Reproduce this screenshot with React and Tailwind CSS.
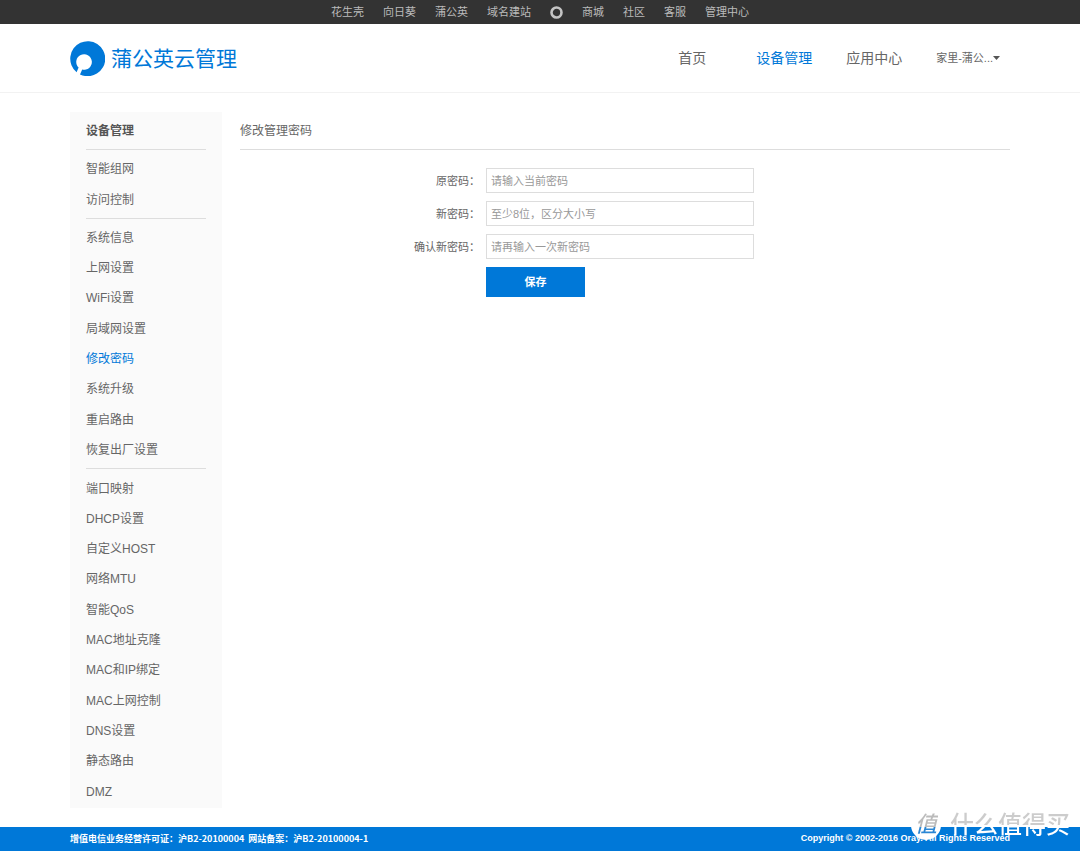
import React, { useState } from 'react';

const topLinks = ['花生壳', '向日葵', '蒲公英', '域名建站'];
const topLinksRight = ['商城', '社区', '客服', '管理中心'];

const fields = [
  { id: 'oldPwd', label: '原密码：', placeholder: '请输入当前密码' },
  { id: 'newPwd', label: '新密码：', placeholder: '至少8位，区分大小写' },
  { id: 'confirmPwd', label: '确认新密码：', placeholder: '请再输入一次新密码' },
];

const menuGroups = [
  {
    grow: 'grow-2',
    items: ['智能组网', '访问控制'],
  },
  {
    grow: 'grow-8',
    items: ['系统信息', '上网设置', 'WiFi设置', '局域网设置', '修改密码', '系统升级', '重启路由', '恢复出厂设置'],
  },
  {
    grow: 'grow-11',
    items: [
      '端口映射',
      'DHCP设置',
      '自定义HOST',
      '网络MTU',
      '智能QoS',
      'MAC地址克隆',
      'MAC和IP绑定',
      'MAC上网控制',
      'DNS设置',
      '静态路由',
      'DMZ',
    ],
  },
];

export default function App() {
  return (
    <div
      lang="zh-CN"
      className="relative flex min-h-screen flex-col bg-white font-['Liberation_Sans','Noto_Sans_CJK_SC',sans-serif] text-[#666]"
    >
      <TopBar />
      <Header />
      <main className="mx-auto flex w-full max-w-[940px] grow gap-[18px] py-[19px]">
        <Sidebar />
        <PasswordForm />
      </main>
      <Footer />
      <Watermark />
    </div>
  );
}

function TopBar() {
  return (
    <nav className="flex h-6 items-center justify-center gap-[19px] bg-[#333] pt-px text-[11px] text-[#bbb]">
      {topLinks.map((text) => (
        <a key={text} href="#">{text}</a>
      ))}
      <a href="#" aria-label="Oray">
        <svg className="size-[13px]" viewBox="0 0 13 13">
          <circle cx="6.5" cy="6.5" r="5" fill="none" stroke="#c4c4c4" strokeWidth="2.6" />
        </svg>
      </a>
      {topLinksRight.map((text) => (
        <a key={text} href="#">{text}</a>
      ))}
    </nav>
  );
}

function Header() {
  return (
    <header className="border-b border-[#f2f2f2]">
      <div className="mx-auto flex h-[68px] w-full max-w-[940px] items-center justify-between">
        <a href="#" className="flex items-center gap-[6px] pt-px text-[21px] text-[#0078d8]">
          <svg className="size-[35px]" viewBox="0 0 35 35">
            <path
              d="M6.6 31.2A17.5 17.5 0 1 1 10 33.4L12.2 28.6A7.8 7.8 0 1 0 8.6 26.6Z"
              fill="#0078d8"
            />
          </svg>
          蒲公英云管理
        </a>
        <nav className="flex items-center gap-[34px] pr-[10px] text-sm">
          <a href="#" className="mr-4">首页</a>
          <a href="#" className="text-[#0078d8]">设备管理</a>
          <a href="#">应用中心</a>
          <button type="button" className="flex items-center pt-px text-[11px]">
            家里-蒲公...
            <svg className="h-1 w-[7px]" viewBox="0 0 7 4">
              <path d="M0 0H7L3.5 4Z" fill="#555" />
            </svg>
          </button>
        </nav>
      </div>
    </header>
  );
}

function Sidebar() {
  return (
    <aside className="flex w-[152px] shrink-0 flex-col bg-[#fafafa] px-4 text-xs">
      <h2 className="h-[37px] font-bold leading-[38px] text-[#555]">设备管理</h2>
      {menuGroups.map((group) => (
        <ul
          key={group.grow}
          className={`flex flex-col border-t border-[#ddd] pt-1 pb-[3px] last:pb-px ${group.grow}`}
        >
          {group.items.map((item) => (
            <li key={item} className="flex min-h-[30px] grow items-center">
              <a href="#" className={item === '修改密码' ? 'text-[#0078d8]' : ''}>{item}</a>
            </li>
          ))}
        </ul>
      ))}
    </aside>
  );
}

function PasswordForm() {
  const [values, setValues] = useState({});

  return (
    <section className="min-w-0 grow">
      <h1 className="h-[38px] border-b border-[#ddd] text-xs leading-[38px]">修改管理密码</h1>
      <form
        className="flex flex-col gap-2 pt-[18px] text-[11px]"
        onSubmit={(e) => e.preventDefault()}
      >
        {fields.map((field) => (
          <div key={field.id} className="flex items-center gap-[6px]">
            <label htmlFor={field.id} className="w-60 pt-px text-right">{field.label}</label>
            <input
              id={field.id}
              type="text"
              value={values[field.id] || ''}
              onChange={(e) => setValues({ ...values, [field.id]: e.target.value })}
              placeholder={field.placeholder}
              className="h-[25px] w-[268px] border border-[#ddd] px-1 placeholder:text-[#999]"
            />
          </div>
        ))}
        <button
          type="submit"
          className="ml-[246px] h-[30px] w-[99px] bg-[#0078d8] font-bold text-white"
        >
          保存
        </button>
      </form>
    </section>
  );
}

function Footer() {
  return (
    <footer className="bg-[#0078d8] text-[9px] font-bold text-white">
      <div className="mx-auto flex h-6 w-full max-w-[940px] items-center justify-between">
        <p className="font-['Noto_Sans_CJK_SC',sans-serif]">
          增值电信业务经营许可证：沪B2-20100004&nbsp; 网站备案：沪B2-20100004-1
        </p>
        <p>Copyright © 2002-2016 Oray. All Rights Reserved</p>
      </div>
    </footer>
  );
}

function Watermark() {
  return (
    <div className="pointer-events-none absolute right-[10px] bottom-[10px] flex items-center gap-[9px]">
      <span className="flex size-[30px] items-center justify-center rounded-full bg-white">
        <span className="bg-linear-to-b from-[#bbb] from-57% to-[#2a86d4] to-57% bg-clip-text px-px text-[22px] font-medium italic leading-[30px] text-transparent">
          值
        </span>
      </span>
      <span className="bg-linear-to-b from-[#ccc] from-50% to-white to-50% bg-clip-text text-2xl font-medium text-transparent">
        什么值得买
      </span>
    </div>
  );
}
